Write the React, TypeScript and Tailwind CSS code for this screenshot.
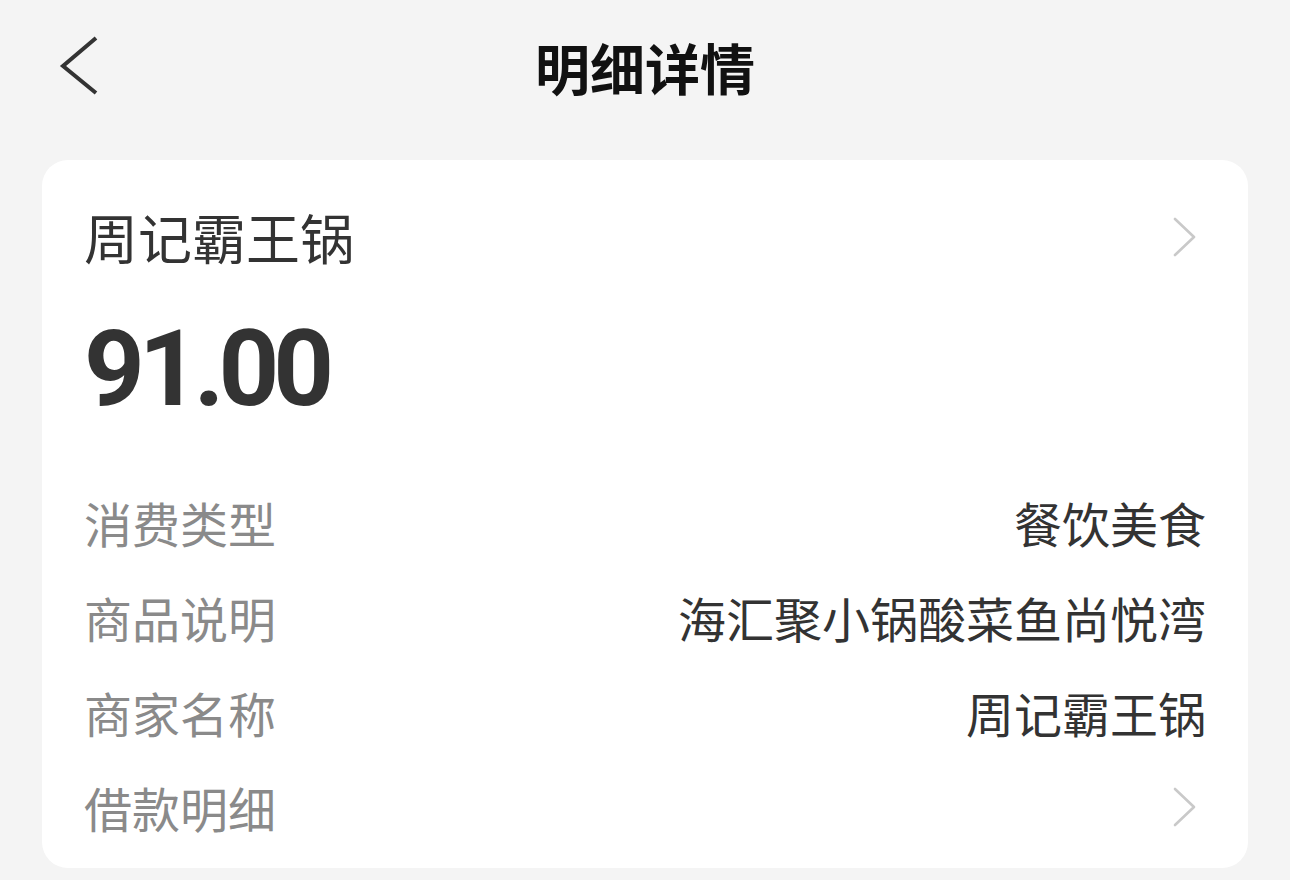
import { ReactNode } from "react";

const cjk = "font-['Noto_Sans_CJK_SC',sans-serif]";

function ChevronRight() {
  return (
    <svg width="26" height="40" viewBox="0 0 26 40" fill="none" className="mr-[8px]">
      <polyline points="3,2 22,20 3,38" stroke="#c9c9c9" strokeWidth="2.6" strokeLinecap="round" strokeLinejoin="round" />
    </svg>
  );
}

function Row({ label, value }: { label: string; value: ReactNode }) {
  return (
    <div className="flex h-[95px] items-center justify-between">
      <span className="text-[48px] leading-none text-[#8a8a8a]">{label}</span>
      {typeof value === "string" ? <span className="text-[48px] leading-none text-[#333333]">{value}</span> : value}
    </div>
  );
}

export default function App() {
  return (
    <div className={`min-h-screen w-full bg-[#f4f4f4] ${cjk}`}>
      <header className="relative flex h-[132px] items-center justify-center">
        <button className="absolute left-[58px] top-[36px]">
          <svg width="42" height="60" viewBox="0 0 42 60" fill="none">
            <polyline points="38,2 5,30 38,57" stroke="#333333" strokeWidth="4" strokeLinejoin="miter" />
          </svg>
        </button>
        <h1 className="text-[55px] font-bold leading-none text-[#111111]">明细详情</h1>
      </header>

      <div className="mx-[42px] mt-[28px] rounded-[26px] bg-white px-[42px] pb-[14px] pt-[44px]">
        <div className="flex h-[66px] items-center justify-between">
          <span className="text-[54px] leading-none text-[#333333]">周记霸王锅</span>
          <ChevronRight />
        </div>
        <div className="mt-[44px] h-[110px] font-['Roboto',sans-serif] text-[106px] font-bold leading-[110px] tracking-[-6px] text-[#333333]">
          91.00
        </div>
        <div className="mt-[50px]">
          <Row label="消费类型" value="餐饮美食" />
          <Row label="商品说明" value="海汇聚小锅酸菜鱼尚悦湾" />
          <Row label="商家名称" value="周记霸王锅" />
          <Row label="借款明细" value={<ChevronRight />} />
        </div>
      </div>
    </div>
  );
}
